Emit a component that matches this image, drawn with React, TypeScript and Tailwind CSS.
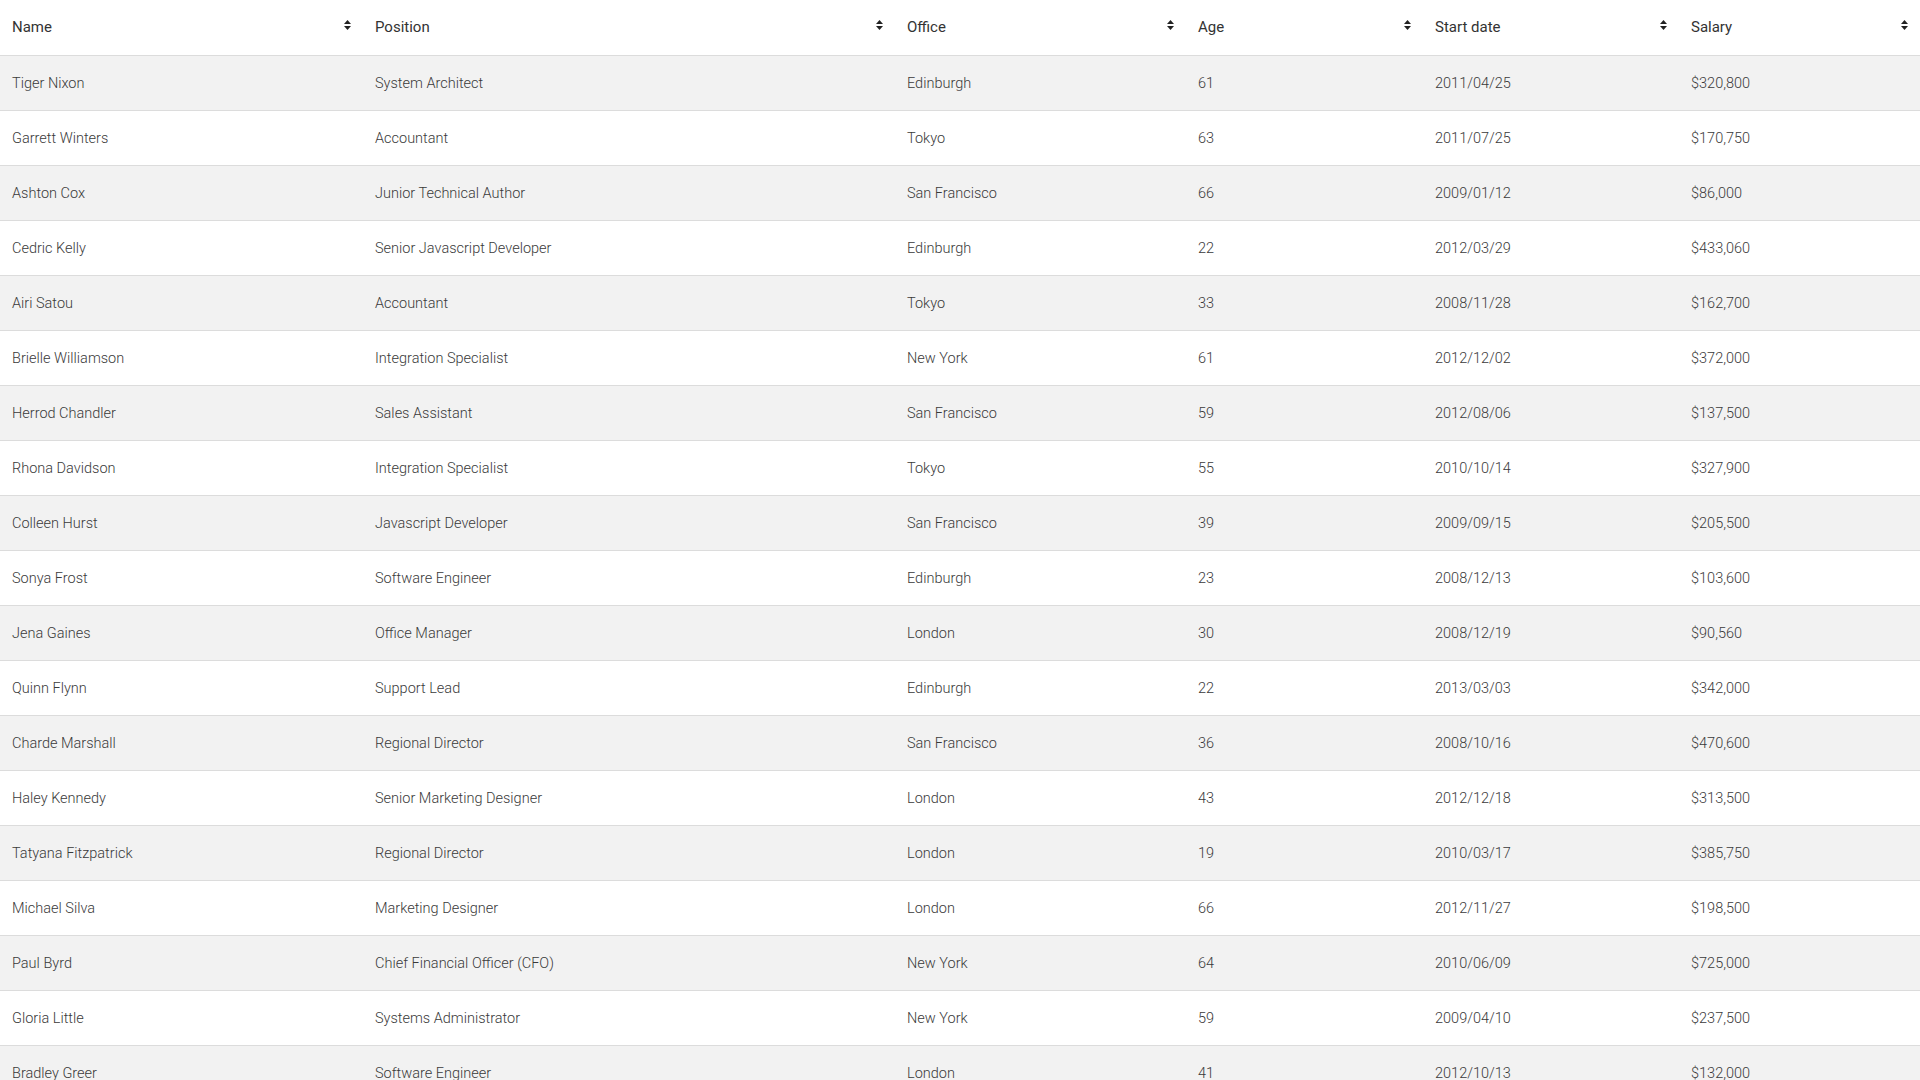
const rows: [string, string, string, number, string, string][] = [
  ["Tiger Nixon", "System Architect", "Edinburgh", 61, "2011/04/25", "$320,800"],
  ["Garrett Winters", "Accountant", "Tokyo", 63, "2011/07/25", "$170,750"],
  ["Ashton Cox", "Junior Technical Author", "San Francisco", 66, "2009/01/12", "$86,000"],
  ["Cedric Kelly", "Senior Javascript Developer", "Edinburgh", 22, "2012/03/29", "$433,060"],
  ["Airi Satou", "Accountant", "Tokyo", 33, "2008/11/28", "$162,700"],
  ["Brielle Williamson", "Integration Specialist", "New York", 61, "2012/12/02", "$372,000"],
  ["Herrod Chandler", "Sales Assistant", "San Francisco", 59, "2012/08/06", "$137,500"],
  ["Rhona Davidson", "Integration Specialist", "Tokyo", 55, "2010/10/14", "$327,900"],
  ["Colleen Hurst", "Javascript Developer", "San Francisco", 39, "2009/09/15", "$205,500"],
  ["Sonya Frost", "Software Engineer", "Edinburgh", 23, "2008/12/13", "$103,600"],
  ["Jena Gaines", "Office Manager", "London", 30, "2008/12/19", "$90,560"],
  ["Quinn Flynn", "Support Lead", "Edinburgh", 22, "2013/03/03", "$342,000"],
  ["Charde Marshall", "Regional Director", "San Francisco", 36, "2008/10/16", "$470,600"],
  ["Haley Kennedy", "Senior Marketing Designer", "London", 43, "2012/12/18", "$313,500"],
  ["Tatyana Fitzpatrick", "Regional Director", "London", 19, "2010/03/17", "$385,750"],
  ["Michael Silva", "Marketing Designer", "London", 66, "2012/11/27", "$198,500"],
  ["Paul Byrd", "Chief Financial Officer (CFO)", "New York", 64, "2010/06/09", "$725,000"],
  ["Gloria Little", "Systems Administrator", "New York", 59, "2009/04/10", "$237,500"],
  ["Bradley Greer", "Software Engineer", "London", 41, "2012/10/13", "$132,000"],
  ["Dai Rios", "Personnel Lead", "Edinburgh", 35, "2012/09/26", "$217,500"],
];

const headers = ["Name", "Position", "Office", "Age", "Start date", "Salary"];

function SortIcon() {
  return (
    <svg width="7" height="10" viewBox="0 0 7 10" className="shrink-0 -mt-[5px]">
      <path d="M3.5 0 L7 4 H0 Z" fill="#222" />
      <path d="M0 6 H7 L3.5 10 Z" fill="#222" />
    </svg>
  );
}

export default function App() {
  return (
    <div
      className="w-[1920px] h-[1080px] overflow-hidden bg-white"
      style={{ fontFamily: "Roboto, 'Noto Sans', sans-serif" }}
    >
      <table className="w-full table-fixed border-collapse">
        <colgroup>
          <col className="w-[363px]" />
          <col className="w-[532px]" />
          <col className="w-[291px]" />
          <col className="w-[237px]" />
          <col className="w-[256px]" />
          <col className="w-[241px]" />
        </colgroup>
        <thead>
          <tr className="h-[55px] border-b border-[#dcdcdc]">
            {headers.map((h) => (
              <th key={h} className="px-3 text-left font-normal text-[15px] text-[#333]">
                <div className="flex items-center justify-between">
                  <span>{h}</span>
                  <SortIcon />
                </div>
              </th>
            ))}
          </tr>
        </thead>
        <tbody>
          {rows.map((r, i) => (
            <tr
              key={r[0]}
              className={`h-[55px] border-b border-[#dcdcdc] ${i % 2 === 0 ? "bg-[#f2f2f2]" : "bg-white"}`}
            >
              {r.map((c, j) => (
                <td key={j} className="px-3 pt-[2px] text-[14.5px] font-light text-[#3a3a3a]">
                  {c}
                </td>
              ))}
            </tr>
          ))}
        </tbody>
      </table>
    </div>
  );
}
